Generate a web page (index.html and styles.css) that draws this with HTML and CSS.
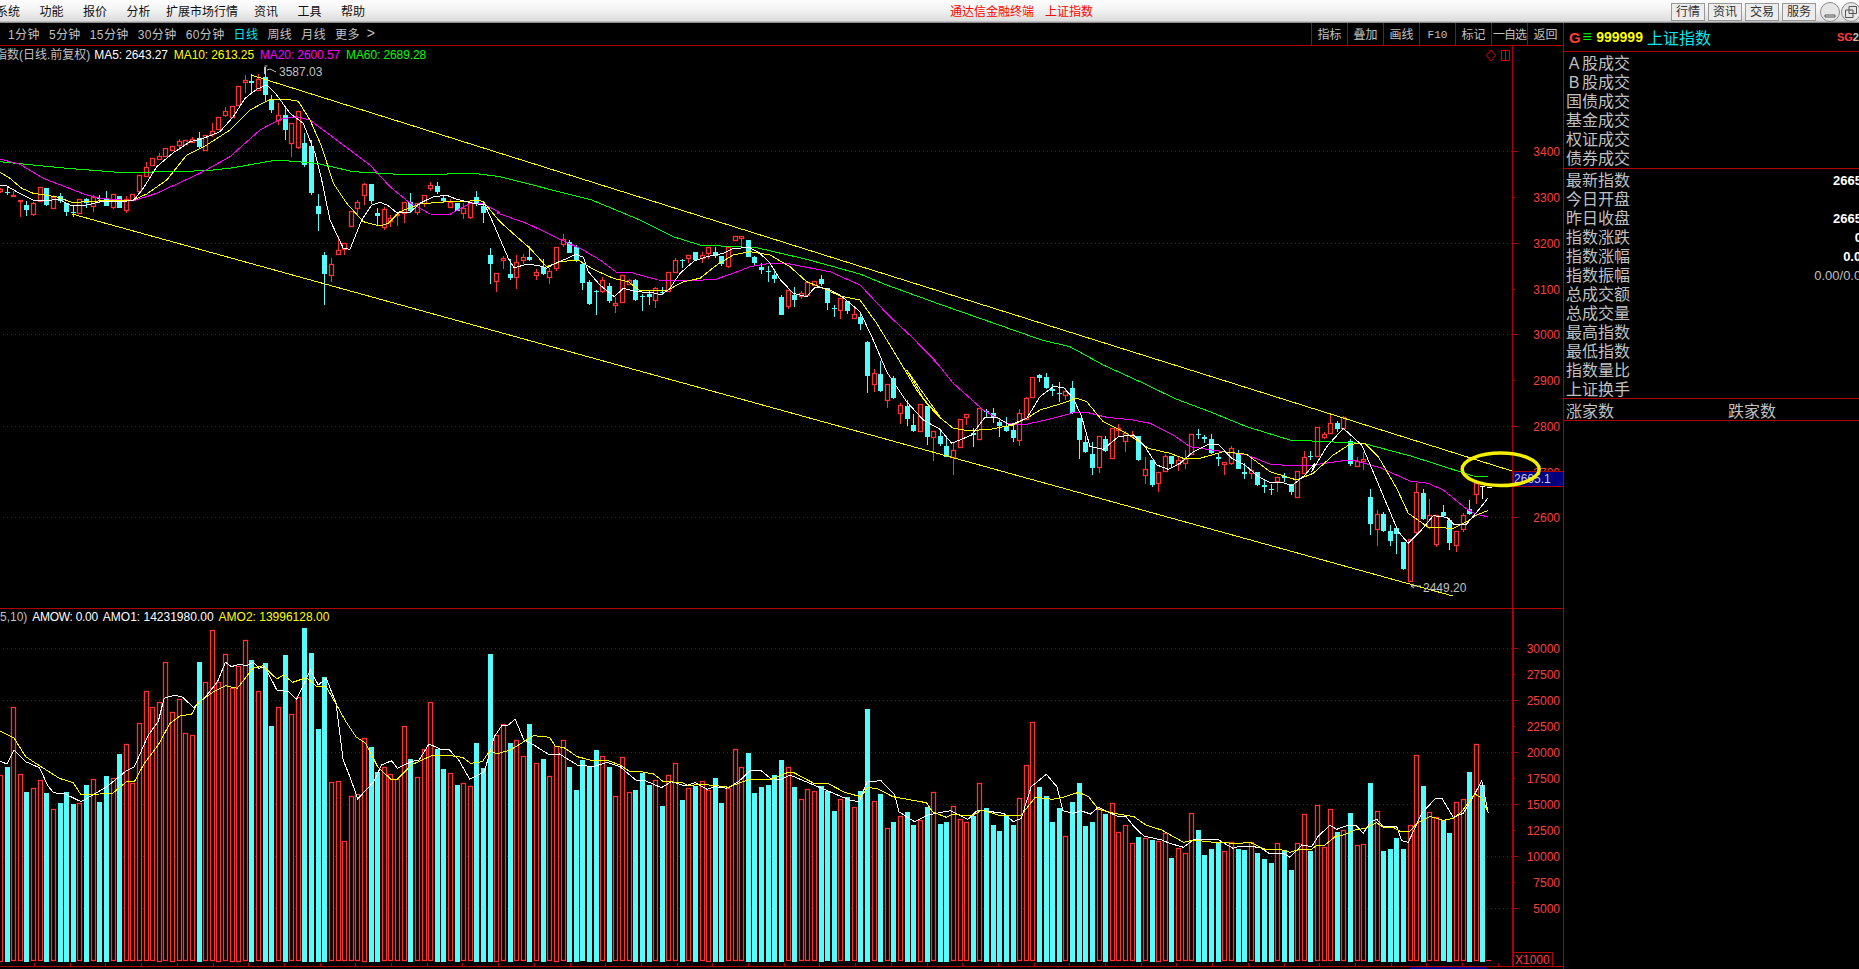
FILE: index.html
```html
<!DOCTYPE html>
<html>
<head>
    <meta charset='utf-8' />
    <title>通达信金融终端 上证指数</title>
    <link rel="stylesheet" href="styles.css">
    <script src='chart.js' defer></script>
</head>
<body>
    <header class='menubar'>
        <nav class='menu'>
            <span class='first'>系统</span><span>功能</span><span>报价</span><span>分析</span>
            <span class='long'>扩展市场行情</span><span>资讯</span><span>工具</span><span>帮助</span>
        </nav>
        <div class='app-title'><span>通达信金融终端</span><span>上证指数</span></div>
        <div class='win-buttons'>
            <div class='win-btn'>行情</div>
            <div class='win-btn'>资讯</div>
            <div class='win-btn'>交易</div>
            <div class='win-btn'>服务</div>
            <svg class='win-round' width='20' height='20' viewBox='0 0 20 20'><circle cx='10' cy='10' r='9.5'/><path d='M5 13h10v2H5z'/></svg>
            <svg class='win-round' width='20' height='20' viewBox='0 0 20 20'><circle cx='10' cy='10' r='9.5'/><path d='M8 4.5h7.5v7H8zM4.5 8h7.5v7.5H4.5z'/></svg>
        </div>
    </header>

    <div class='workspace'>
        <main class='chart-col'>
            <div class='toolbar'>
                <div class='periods'>
                    <span>1分钟</span><span>5分钟</span><span>15分钟</span><span>30分钟</span><span>60分钟</span>
                    <span class='current'>日线</span><span>周线</span><span>月线</span><span>更多</span><span class='more'>&gt;</span>
                </div>
                <div class='tools'>
                    <span>指标</span><span>叠加</span><span>画线</span><span class='f10'>F10</span><span>标记</span><span class='pick'>一自选</span><span>返回</span>
                </div>
            </div>

            <section class='panel price-panel'>
                <div class='legend'>
                    <span class='grey name'>指数(日线.前复权)</span>
                    <span class='white'>MA5: 2643.27</span>
                    <span class='yellow'>MA10: 2613.25</span>
                    <span class='magenta'>MA20: 2600.57</span>
                    <span class='green'>MA60: 2689.28</span>
                </div>
                <svg id='priceChart' width='1563' height='562' viewBox='0 46 1563 562'></svg>
            </section>

            <section class='panel volume-panel'>
                <div class='legend'>
                    <span class='grey'>5,10)</span>
                    <span class='white tight'>AMOW: 0.00</span>
                    <span class='white'>AMO1: 14231980.00</span>
                    <span class='yellow'>AMO2: 13996128.00</span>
                </div>
                <svg id='volumeChart' width='1563' height='357' viewBox='0 609 1563 357'></svg>
            </section>
            <div class='statusline'><span class='scroll'></span></div>
        </main>

        <aside class='quote'>
            <div class='quote-head'>
                <span class='g'>G</span><span class='menu-mark'>≡</span><span class='code'>999999</span><span class='index-name'>上证指数</span><span class='sg'>SG<i>2</i></span>
            </div>
            <div class='quote-group first-group'>
                <div class='row'><span><b class='letter'>A</b>股成交</span></div>
                <div class='row'><span><b class='letter'>B</b>股成交</span></div>
                <div class='row'><span>国债成交</span></div>
                <div class='row'><span>基金成交</span></div>
                <div class='row'><span>权证成交</span></div>
                <div class='row'><span>债券成交</span></div>
            </div>
            <div class='quote-group second-group'>
                <div class='row'><span>最新指数</span><em>2665.10</em></div>
                <div class='row'><span>今日开盘</span></div>
                <div class='row'><span>昨日收盘</span><em>2665.10</em></div>
                <div class='row'><span>指数涨跌</span><em>0.00</em></div>
                <div class='row'><span>指数涨幅</span><em>0.00%</em></div>
                <div class='row'><span>指数振幅</span><em class='plain'>0.00/0.00%</em></div>
                <div class='row'><span>总成交额</span></div>
                <div class='row'><span>总成交量</span></div>
                <div class='row'><span>最高指数</span></div>
                <div class='row'><span>最低指数</span></div>
                <div class='row'><span>指数量比</span></div>
                <div class='row'><span>上证换手</span></div>
            </div>
            <div class='updown'><span>涨家数</span><span>跌家数</span></div>
        </aside>
    </div>
</body>
</html>
```

FILE: styles.css
```css
html, body {
    margin: 0;
    height: 100%;
    overflow: hidden;
    background: #000;
}

body {
    width: 1859px;
    height: 969px;
    font-family: "Liberation Sans", "Noto Sans CJK SC", sans-serif;
    font-size: 12px;
    color: #c0c0c0;
}

.menubar {
    height: 23px;
    box-sizing: border-box;
    display: flex;
    align-items: center;
    overflow: hidden;
    background: linear-gradient(#fdfdfd, #f4f4f4 40%, #dcdcdc 92%, #8c8c8c 96%);
    color: #111;
}

.menu {
    display: flex;
    width: 950px;
    flex: none;
    padding-bottom: 2px;
}

.menu span {
    margin-right: 19.5px;
    white-space: nowrap;
}

.menu .first {
    margin-left: -4px;
}

.menu .long {
    margin-left: -4px;
    margin-right: 16px;
}

.app-title {
    color: #f00;
    flex: none;
    padding-bottom: 2px;
}

.app-title span {
    margin-right: 11px;
}

.win-buttons {
    margin-left: auto;
    margin-right: -2px;
    display: flex;
    align-items: center;
    gap: 3px;
    flex: none;
    width: 190px;
}

.win-btn {
    width: 34px;
    height: 18px;
    line-height: 17px;
    box-sizing: border-box;
    border: 1px solid #999;
    background: #ececec;
    color: #333;
    text-align: center;
    flex: none;
}

.win-round {
    flex: none;
    margin-left: 1px;
}

.win-round + .win-round {
    margin-left: -2px;
}

.win-round circle {
    fill: #e6e6e6;
    stroke: #8a8a8a;
}

.win-round path {
    fill: none;
    stroke: #555;
}

.workspace {
    display: flex;
    height: 946px;
}

.chart-col {
    width: 1563px;
    flex: none;
}

.toolbar {
    height: 22px;
    border-bottom: 1px solid #b00000;
    display: flex;
    justify-content: space-between;
}

.periods {
    display: flex;
    align-items: center;
    gap: 9px;
    padding-left: 8px;
    padding-bottom: 2px;
    letter-spacing: 0.4px;
}

.periods .current {
    color: #00e8e8;
}

.periods .more {
    font-size: 14px;
    margin-left: -2px;
}

.tools {
    display: flex;
}

.tools span {
    width: 36px;
    box-sizing: border-box;
    border-left: 1px solid #b00000;
    text-align: center;
    line-height: 20px;
    padding-top: 2px;
    white-space: nowrap;
    overflow: hidden;
}

.tools .f10 {
    font-family: "Liberation Mono", monospace;
    font-size: 11px;
}

.tools .pick {
    letter-spacing: -1px;
}

.panel {
    position: relative;
}

.panel svg {
    display: block;
}

.price-panel {
    height: 562px;
    border-bottom: 1px solid #b00000;
}

.volume-panel {
    height: 357px;
    border-bottom: 1px solid #b00000;
}

.legend {
    position: absolute;
    top: 1px;
    left: 0;
    display: flex;
    gap: 6px;
    line-height: 17px;
    white-space: nowrap;
    letter-spacing: -0.1px;
}

.volume-panel .legend {
    top: 0;
    gap: 5px;
    letter-spacing: 0;
}

.legend .name {
    margin-left: -5px;
    margin-right: -2px;
    letter-spacing: 0;
}

.legend .tight {
    letter-spacing: -0.3px;
}

.grey { color: #c0c0c0; }
.white { color: #fff; }
.yellow { color: #ff0; }
.magenta { color: #f0f; }
.green { color: #0f0; }

.statusline {
    height: 2px;
    position: relative;
}

.scroll {
    position: absolute;
    left: 1410px;
    top: 0;
    width: 77px;
    height: 2px;
    background: #000090;
}

/* chart strokes */
.frame { stroke: #b00000; fill: none; shape-rendering: crispEdges; }
.gridline { stroke: #a00000; stroke-dasharray: 1 3; shape-rendering: crispEdges; }
.axis-text { fill: #ff3c3c; font-size: 12px; }
.price-box { fill: #000080; stroke: #b00000; shape-rendering: crispEdges; }
.price-text { fill: #c8c8d8; font-size: 12px; }
.mark-text { fill: #c0c0c0; font-size: 12px; }
.mark-line { stroke: #c0c0c0; fill: none; }
.up { stroke: #ff3232; stroke-width: 1.3; fill: #000; }
.wick-up { stroke: #ff3232; shape-rendering: crispEdges; }
.down { fill: #54fcfc; shape-rendering: crispEdges; }
.wick-down { stroke: #54fcfc; shape-rendering: crispEdges; }
.wick-now { stroke: #fff; shape-rendering: crispEdges; }
.line { fill: none; shape-rendering: crispEdges; }
.line-white { stroke: #fff; }
.line-yellow { stroke: #ff0; }
.line-magenta { stroke: #f0f; }
.line-green { stroke: #0f0; }
.ring { fill: none; stroke: #f4ee00; stroke-width: 3.5; }
.diamond { fill: none; stroke: #e00000; }

.quote {
    flex: none;
    width: 296px;
    box-sizing: border-box;
    border-left: 1px solid #b00000;
    overflow: hidden;
    font-size: 16px;
}

.quote-head {
    height: 28px;
    border-bottom: 1px solid #b00000;
    display: flex;
    align-items: center;
    white-space: nowrap;
    padding-left: 5px;
}

.quote-head .g {
    color: #ff3c3c;
    font-weight: bold;
    font-size: 15px;
    width: 20px;
}

.menu-mark {
    color: #0f0;
    font-size: 16px;
    width: 20px;
}

.code {
    color: #ff0;
    font-weight: bold;
    font-size: 14px;
    margin-right: 4px;
}

.index-name {
    color: #00e8f0;
}

.sg {
    margin-left: 126px;
    font-size: 11px;
    font-weight: bold;
    color: #ff3c3c;
}

.sg i {
    font-style: normal;
    color: #c0c0c0;
}

.quote-group {
    border-bottom: 1px solid #b00000;
    width: 316px;
}

.first-group {
    padding-bottom: 2px;
}

.second-group {
    padding-bottom: 1px;
}

.row {
    height: 19px;
    line-height: 23px;
    padding-left: 2px;
    display: flex;
    justify-content: space-between;
}

.row em {
    font-style: normal;
    font-weight: bold;
    font-size: 13px;
    color: #fff;
}

.row em.plain {
    font-weight: normal;
    color: #c0c0c0;
}

.letter {
    display: inline-block;
    width: 16px;
    text-align: center;
    font-weight: normal;
}

.updown {
    height: 21px;
    line-height: 25px;
    padding-left: 2px;
    border-bottom: 1px solid #b00000;
    display: flex;
    gap: 114px;
}
```

FILE: chart.js
```javascript
// day index -> pixel; candles and volume bars share this grid
var STEP = 6.618;
function dayX(i) { return Math.round(i * STEP); }

// volume bars: colour letter + top of bar read off the screen (3x, from y=600)
var volumes = ('r525 c501 r322 r523 c576 r565 r541 c579 r628 c609 c576 c612 r610 c555 r538 c606 c528 r535 c462 r433 ' +
    'r550 r370 r274 r322 r306 r187 r336 r298 r400 r406 c186 r247 r91 r245 r163 r264 r197 r121 c180 r274 ' +
    'c189 c378 r322 c165 r343 r292 c84 c159 c387 c231 r547 r544 r724 r589 r583 r414 c441 c516 r502 r523 ' +
    'r538 r379 c477 r532 r448 r307 c447 c507 r520 c555 r550 r559 c429 c504 c162 r405 r373 c429 r421 r469 ' +
    'c372 r490 c477 r529 r437 r421 c501 c570 c481 c501 c450 r469 c501 r589 r472 r577 c570 c519 c555 r541 ' +
    'c618 r526 r490 c600 r565 c558 r544 r570 c534 c609 r565 r448 r502 c459 c579 c561 c555 c525 c480 r502 ' +
    'c561 r598 r568 r574 c558 c574 c633 r598 c592 r622 c573 c327 r604 c582 r685 c666 r649 c636 c675 r659 ' +
    'c621 r577 c672 c666 r619 r658 r667 c648 r550 c624 c675 c693 c648 c675 r595 r496 r367 c561 c588 c666 ' +
    'c624 r709 c606 c549 c678 c666 r625 c642 r610 r697 r676 r730 c711 r715 c720 r723 r700 c774 r745 r760 ' +
    'r640 c690 c765 c747 c726 r754 r727 c747 c750 r727 c759 c777 c789 r730 c750 c810 r730 r643 c753 r616 ' +
    'r742 r628 c697 r691 c639 r736 r733 c549 r634 c753 c747 c714 c747 r676 r466 c558 r637 r652 c661 c699 ' +
    'r607 r598 c516 r433 c555').split(' ');

// candles: wick top, body top, body bottom, wick bottom (3x, from y0)
var candleRuns = [
    { y0: 60, rows: [
        [385,388,393,398],[380,396,399,405],[392,405,409,409],[420,421,424,472],[423,435,450,467],
        [425,428,462,467],[382,382,425,425],[385,385,437,437],[405,410,443,445],[400,408,422,430],
        [428,430,458,467],[435,457,460,472],[418,418,461,463],[415,418,430,443],[405,411,439,455],
        [405,415,418,430],[393,417,437,437],[403,403,443,447],[408,408,443,445],[408,418,452,460],
        [403,403,421,423],[346,346,394,396],[305,320,346,348],[293,295,317,319],[280,287,296,300],
        [263,263,288,290],[257,257,269,270],[238,244,257,270],[240,241,254,256],[230,236,245,248],
        [216,234,260,268],[226,226,272,274],[190,214,224,230],[171,171,208,210],[142,153,164,170],
        [137,137,170,172],[77,77,134,136],[45,59,65,98],[42,64,71,100],[42,58,92,94],
        [20,52,105,123],[105,121,152,158],[130,165,179,195],[145,165,209,240],[190,190,250,290],
        [154,154,262,268],[218,250,315,322],[241,258,400,404],[402,438,461,513],[577,586,644,735],
        [595,613,647,665],[527,571,583,583],[550,550,568,586],[454,454,500,500],[420,427,445,468],
        [368,372,404,435],[372,372,423,432],[443,459,467,495],[440,448,503,510],[465,475,484,500],
        [458,462,464,497],[427,427,460,488],[400,427,455,458],[428,428,456,465],[404,404,427,440],
        [367,375,385,392],[365,378,397,402],[405,414,423,430],[418,427,443,445],[428,428,452,454],
        [430,443,459,476],[426,426,472,476],[393,412,433,437],[430,438,460,488]
    ] },
    { y0: 200, rows: [
        [145,165,192,252],[220,220,245,276],[168,173,178,207],[178,222,235,240],[165,185,230,267],
        [163,172,182,192],[138,171,180,182],[208,217,227,240],[178,202,222,225],[205,214,233,252],
        [142,142,205,212],[102,118,134,140],[120,125,157,160],[135,140,180,185],[185,192,250,270],
        [240,247,312,316],[270,272,274,345],[232,241,275,280],[250,259,303,310],[290,310,316,338],
        [226,226,307,309],[238,241,252,256],[236,240,300,303],[282,287,290,333],[272,282,290,315],
        [262,265,302,324],[262,275,278,285],[217,217,275,277],[175,181,218,220],[178,180,183,205],
        [164,164,174,190],[157,157,180,182],[155,166,176,190],[140,140,158,177],[140,157,170,173],
        [167,167,190,197],[140,140,197,203],[109,109,121,122],[109,109,116,137],[120,120,170,172],
        [167,171,190,195],[190,200,208,222],[198,214,216,245],[208,225,237,250],[285,291,344,345],
        [271,271,320,326],[262,285,300,320],[272,278,288,297],[245,245,285,287],[244,244,256,258],
        [225,237,252,258],[264,264,308,330],[316,324,327,352],[295,295,332,356],[303,303,332,342],
        [318,343,355,358],[338,351,372,390],[424,426,527,578]
    ] },
    { y0: 340, rows: [
        [87,100,134,155],[63,102,153,155],[133,133,181,203],[108,115,175,177],[189,195,218,252],
        [180,198,236,258],[222,255,273,275],[193,193,273,277],[198,198,290,315],[274,274,292,362],
        [268,289,312,318],[288,318,350,352],[305,331,353,405],[238,238,323,325],[221,221,230,256],
        [265,280,287,320],[205,205,299,301],[208,212,215,235],[205,220,235,248],[235,247,258,290],
        [232,258,273,275],[255,270,293,305],[208,218,298,317],[172,174,236,238],[110,112,172,174],
        [103,105,113,125],[99,112,145,147],[132,148,153,168],[127,159,161,187],[143,154,167,180],
        [123,145,220,222],[235,235,300,356],[289,307,338,340],[305,343,386,404],[287,287,380,398],
        [288,298,333,336],[265,265,356,358],[252,265,270,288],[273,279,302,335],[273,284,286,290],
        [289,289,360,363],[350,388,407,432],[360,360,436,440],[397,397,430,456],[342,349,395,397],
        [348,348,372,382],[350,361,374,392],[330,357,370,387],[283,283,344,346],[267,282,285,297],
        [285,291,296,310],[283,298,341,343],[340,351,358,378],[367,367,373,405],[318,325,370,375],
        [330,338,386,388],[370,396,403,417],[358,391,400,417],[396,396,435,438],[420,435,440,460],
        [432,448,452,465],[412,412,425,457],[400,408,415,425],[433,433,458,465],[394,394,472,474],
        [333,352,401,403]
    ] },
    { y0: 400, rows: [
        [153,168,172,180],[82,82,170,172],[97,103,112,118],[44,68,97,99],[63,68,86,96],
        [47,52,86,90],[117,122,190,197],[170,182,197,199],[155,178,183,210],[268,292,372,405],
        [330,343,389,437],[335,343,393,397],[375,393,423,437],[380,385,402,462],[427,427,507,509],
        [418,418,545,547],[249,277,398,403],[268,280,358,360],[297,345,381,386],[345,345,433,442],
        [316,337,350,352],[355,360,429,449],[394,394,436,455],[338,346,388,395],[300,327,342,344],
        [250,250,284,311],[258,258,260,296],[261,261,263,263]
    ] }
];

// averages as flat x,y lists cut from the same enlarged views: [x0, y0, xScale, points]
var maWhite = [
    [0,60,3,[0,377,20,378,50,395,100,421,140,422,175,418,215,437,260,435,300,425,340,425,400,422,430,385,470,320,520,278,570,245,610,235,660,215,700,170,735,115,770,88,800,75,830,105,870,160,910,190,945,280,965,360,990,480,1030,565,1050,568,1085,480,1115,435,1140,427,1165,437,1190,458,1230,457,1260,430,1300,410,1340,406,1370,418,1420,430,1455,435,1480,490,1500,537]],
    [440,200,3,[205,175,222,203,265,192,300,198,320,205,345,190,375,178,408,163,430,172,445,215,480,255,523,290,550,265,590,275,640,278,663,285,690,265,720,220,762,183,800,170,850,160,880,145,930,143,960,160,990,190,1020,238,1060,280,1100,290,1125,262,1160,265,1200,285,1260,335,1300,420,1340,515,1400,605,1450,660,1500,688]],
    [840,340,3,[310,280,335,310,395,285,435,232,470,232,510,255,560,235,600,170,640,140,670,142,700,175,725,230,750,320,790,328,835,290,880,285,915,320,950,375,985,388,1020,370,1060,335,1105,313,1135,313,1175,355,1215,375,1255,410,1290,428,1330,428,1355,438,1395,405,1425,370]],
    [1300,400,3,[35,215,80,140,130,85,185,135,215,205,255,300,295,395,325,430,360,395,400,347,440,352,460,372,500,372,540,325,563,295]]
];
var maYellow = [
    [0,60,3,[0,337,30,355,65,385,100,400,135,405,175,412,215,427,270,425,330,420,400,420,440,402,500,360,560,285,620,255,690,210,750,150,810,118,860,118,895,124,930,180,965,260,1000,370,1040,430,1090,485,1140,498,1165,490,1200,455,1260,432,1340,425,1440,422]],
    [440,200,3,[130,5,180,65,230,110,270,145,320,200,360,185,415,180,460,208,520,235,565,245,600,272,680,272,730,245,780,235,830,195,880,165,930,155,990,165,1050,200,1100,245,1150,265,1200,288,1260,300,1310,370,1380,485,1430,570,1460,610,1500,650]],
    [840,340,3,[200,90,250,175,290,225,340,265,385,272,450,268,520,255,560,235,600,210,650,195,710,175,740,185,790,245,860,280,925,325,990,340,1030,355,1080,355,1150,335,1220,343,1290,395,1370,420]],
    [1300,400,3,[40,220,100,165,150,133,195,130,235,170,290,265,325,340,385,382,460,385,500,365,530,345,563,332]]
];
var maMagenta = [
    [0,60,3,[0,297,60,313,130,355,260,405,300,415,400,423,470,400,600,340,690,290,780,210,840,178,890,170,930,180,990,225,1050,270,1110,315,1170,380,1225,425,1290,462,1350,463,1410,430,1450,432,1500,458]],
    [440,200,3,[170,38,265,72,360,118,430,150,480,180,530,217,570,217,600,225,655,240,760,242,830,237,880,220,930,200,990,190,1050,192,1100,202,1170,215,1260,255,1350,350,1420,415,1500,500]],
    [840,340,3,[225,0,280,55,340,130,385,170,430,210,500,250,550,255,640,235,700,218,740,217,800,232,880,240,930,250,1000,285,1050,320,1150,335,1220,345,1290,372,1360,378,1430,375]],
    [1300,400,3,[60,192,130,182,170,183,240,203,330,243,385,250,430,270,500,327,530,343,563,350]]
];
var maGreen = [
    [0,60,3,[0,305,100,315,200,325,370,338,620,332,700,323,830,300,950,310,1060,335,1230,345,1420,340,1500,350]],
    [440,200,3,[455,0,600,60,700,110,780,135,950,143,1100,178,1260,222,1340,255,1500,313]],
    [840,340,3,[605,0,690,20,790,75,900,125,1010,178,1110,215,1220,260,1350,300,1500,307]],
    [1300,400,3,[190,130,340,170,470,212,520,228,563,230]]
];
var amoWhite = [
    [0,600,2.529,[0,484,18,492,36,450,65,485,100,503,120,555,135,578,165,582,205,605,235,585,270,560,320,512,340,500,375,405,400,365,415,295,440,286,460,290,490,323,520,290,550,245,570,187,585,200,605,193,625,197,640,187,655,205,670,200,700,270,730,275,750,298,785,210,805,255,825,235,850,310,868,480,885,530,905,597,945,545,965,495,990,482,1005,505,1040,485,1060,480,1085,432,1115,448,1135,448,1160,480,1188,538,1225,515,1250,410,1270,375,1285,375,1303,358,1325,420,1350,435,1390,465,1415,462,1460,495,1500,500,1535,487,1568,500]],
    [620,600,2.529,[40,540,60,540,105,563,130,545,165,558,190,548,220,568,240,560,270,565,300,545,330,510,355,510,380,535,405,540,430,525,490,555,540,580,580,600,605,605,625,545,660,542,695,585,705,635,745,665,780,645,800,640,835,632,880,658,905,630,970,640,995,665,1015,655,1040,560,1078,523,1105,560,1120,632,1145,640,1165,632,1190,642,1210,622,1260,650,1280,650,1300,680,1325,708,1370,720,1390,730,1425,742,1450,720,1510,717,1550,745,1568,738]],
    [1240,600,3,[60,742,90,762,130,760,150,772,185,735,215,740,235,708,270,676,290,688,320,677,350,678,370,700,390,668,410,658,430,680,470,680,485,722,505,727,545,640,585,597,605,594,640,652,670,640,700,590,725,542,745,640]]
];
var amoYellow = [
    [0,600,2.529,[0,393,35,413,65,470,100,497,150,535,185,548,205,585,285,580,320,545,340,545,365,490,400,435,430,370,455,348,485,342,500,310,540,275,570,257,600,265,640,205,665,197,700,237,717,225,740,247,775,233,800,258,825,260,875,365,900,410,925,430,955,500,990,540,1005,538,1040,495,1090,468,1125,465,1170,472,1190,490,1220,485,1240,450,1255,462,1290,450,1350,407,1390,412,1405,440,1425,442,1460,470,1500,482,1540,483,1568,495]],
    [620,600,2.529,[25,515,55,515,85,522,110,545,155,547,175,558,200,552,250,558,275,562,310,545,330,537,385,537,425,517,440,518,490,550,525,550,570,578,610,590,625,563,650,565,690,590,775,608,790,635,825,652,840,643,890,648,915,630,965,648,1015,645,1050,592,1095,598,1120,592,1160,577,1185,590,1210,628,1250,640,1300,650,1330,675,1370,690,1425,727,1450,720,1510,728,1568,730]],
    [1240,600,3,[30,727,80,750,120,748,150,757,180,748,215,748,230,736,255,735,285,710,310,705,350,688,375,686,410,668,430,682,460,682,480,694,510,694,530,670,570,649,610,661,640,655,665,635,705,582,725,595,745,637]]
];

var SVGNS = 'http://www.w3.org/2000/svg';

function add(svg, tag, cls, attrs, text) {
    var el = document.createElementNS(SVGNS, tag);
    if (cls) el.setAttribute('class', cls);
    for (var k in attrs) el.setAttribute(k, attrs[k]);
    if (text !== undefined) el.textContent = text;
    svg.appendChild(el);
    return el;
}

function hline(svg, cls, x1, x2, y) {
    add(svg, 'line', cls, { x1: x1, x2: x2, y1: y + 0.5, y2: y + 0.5 });
}

function drawAverage(svg, cls, runs) {
    var pts = [];
    runs.forEach(function (run) {
        var p = run[3];
        for (var i = 0; i < p.length; i += 2) {
            pts.push((run[0] + p[i] / run[2]).toFixed(1) + ',' + (run[1] + p[i + 1] / 3).toFixed(1));
        }
    });
    add(svg, 'polyline', 'line ' + cls, { points: pts.join(' ') });
}

function drawPrice(svg) {
    var axisX = 1512;

    [3400, 3200, 3000, 2800, 2600].forEach(function (p) {
        hline(svg, 'gridline', 3, axisX, Math.round(151.3 + (3400 - p) * 0.4575));
    });

    // candles
    var index = 0;
    candleRuns.forEach(function (run) {
        run.rows.forEach(function (c) {
            var x = dayX(index);
            var up = volumes[index] && volumes[index][0] == 'r';
            var now = index >= 224;
            var wt = run.y0 + c[0] / 3, bt = run.y0 + c[1] / 3, bb = run.y0 + c[2] / 3, wb = run.y0 + c[3] / 3;
            add(svg, 'line', now ? 'wick-now' : (up ? 'wick-up' : 'wick-down'), { x1: x + 0.5, x2: x + 0.5, y1: wt, y2: wb });
            if (now) {
                hline(svg, 'wick-now', x - 2, x + 3, Math.round(bt));
            } else if (up) {
                add(svg, 'rect', 'up', { x: x - 1.5, y: Math.round(bt) + 0.5, width: 4, height: Math.max(1, Math.round(bb - bt)) });
            } else {
                add(svg, 'rect', 'down', { x: x - 2, y: Math.round(bt), width: 5, height: Math.max(1, Math.round(bb - bt)) });
            }
            index++;
        });
    });

    drawAverage(svg, 'line-green', maGreen);
    drawAverage(svg, 'line-magenta', maMagenta);
    drawAverage(svg, 'line-yellow', maYellow);
    drawAverage(svg, 'line-white', maWhite);

    // channel
    add(svg, 'line', 'line line-yellow', { x1: 251, y1: 75, x2: 1512, y2: 471 });
    add(svg, 'line', 'line line-yellow', { x1: 72, y1: 214, x2: 1453, y2: 596 });

    // high / low marks
    add(svg, 'path', 'mark-line', { d: 'M264.5 67v7M264.5 66h3M267 70l3-1 6 3' });
    add(svg, 'text', 'mark-text', { x: 279, y: 76 }, '3587.03');
    add(svg, 'path', 'mark-line', { d: 'M1421 586h-10l3-2M1411 586l3 2' });
    add(svg, 'text', 'mark-text', { x: 1423, y: 592 }, '2449.20');

    // axis
    add(svg, 'line', 'frame', { x1: axisX + 0.5, x2: axisX + 0.5, y1: 46, y2: 608 });
    for (var p = 2600; p <= 3400; p += 100) {
        var y = Math.round(151.3 + (3400 - p) * 0.4575);
        hline(svg, 'frame', axisX, axisX + (p % 200 ? 3 : 6), y);
        add(svg, 'text', 'axis-text', { x: 1560, y: y + 5, 'text-anchor': 'end' }, p);
    }

    add(svg, 'path', 'diamond', { d: 'M1491 50l4.5 5.5-4.5 5.5-4.5-5.5z' });
    add(svg, 'path', 'diamond', { d: 'M1501.5 50.5h8v10h-8zM1505.5 50.5v10' });

    add(svg, 'rect', 'price-box', { x: 1513.5, y: 471.5, width: 50, height: 15 });
    add(svg, 'text', 'price-text', { x: 1514, y: 483 }, '2665.1');
    add(svg, 'ellipse', 'ring', { cx: 1500.7, cy: 469.3, rx: 38.5, ry: 16.2 });
}

function drawVolume(svg) {
    var axisX = 1512, base = 960.5;

    for (var v = 5000; v <= 30000; v += 5000) {
        hline(svg, 'gridline', 3, axisX, Math.round(648.3 + (30000 - v) * 0.0104));
    }

    volumes.forEach(function (bar, i) {
        var x = dayX(i), top = 600 + parseInt(bar.slice(1), 10) / 3;
        if (bar[0] == 'r') {
            add(svg, 'rect', 'up', { x: x - 1.5, y: Math.round(top) + 0.5, width: 4, height: Math.round(base - top) });
        } else {
            add(svg, 'rect', 'down', { x: x - 2, y: Math.round(top), width: 5, height: Math.round(base - top) + 1 });
        }
    });
    hline(svg, 'wick-up', 1486, 1491, 960);

    drawAverage(svg, 'line-white', amoWhite);
    drawAverage(svg, 'line-yellow', amoYellow);

    // axis
    add(svg, 'rect', 'frame', { x: axisX + 0.5, y: 609.5, width: 1, height: 357 });
    for (var t = 5000; t <= 30000; t += 2500) {
        var y = Math.round(648.3 + (30000 - t) * 0.0104);
        hline(svg, 'frame', axisX, axisX + (t % 5000 ? 3 : 6), y);
        add(svg, 'text', 'axis-text', { x: 1560, y: y + 5, 'text-anchor': 'end' }, t);
    }
    add(svg, 'rect', 'frame', { x: 1513.5, y: 952.5, width: 39, height: 15 });
    add(svg, 'text', 'axis-text', { x: 1515, y: 964 }, 'X1000');
    for (var m = 34; m < 1512; m += 35.7) {
        add(svg, 'line', 'frame', { x1: Math.round(m) + 0.5, x2: Math.round(m) + 0.5, y1: 963, y2: 966 });
    }
}

drawPrice(document.getElementById('priceChart'));
drawVolume(document.getElementById('volumeChart'));
```
